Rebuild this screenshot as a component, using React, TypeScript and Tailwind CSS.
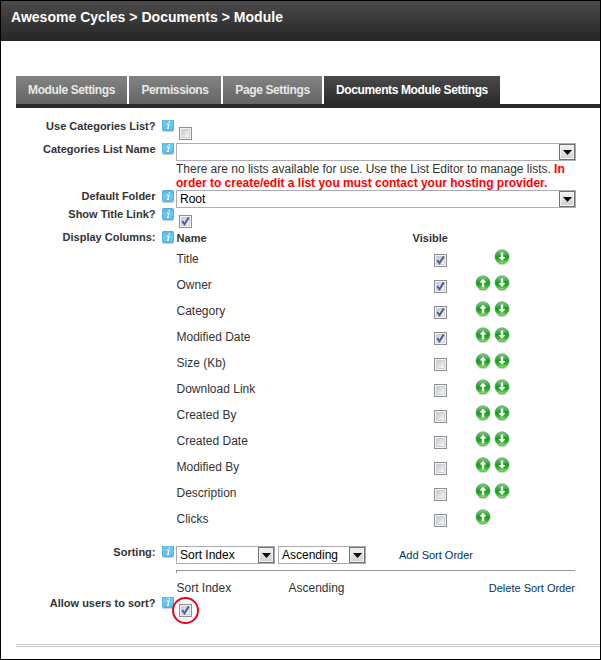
import type { ReactNode } from "react";

function InfoIcon({ cut = false }: { cut?: boolean }) {
  return (
    <svg width="13" height="13" viewBox="0 0 13 13" className="ml-[6px] shrink-0">
      <defs>
        <linearGradient id="info" x1="0" y1="0" x2="0" y2="1">
          <stop offset="0" stopColor="#55b4e4" />
          <stop offset="0.5" stopColor="#6fcbf3" />
          <stop offset="1" stopColor="#55b9ea" />
        </linearGradient>
      </defs>
      <rect x="0.5" y={cut ? -3 : 0.5} width="11" height={cut ? 13.5 : 11} rx="1" fill="url(#info)" stroke="#3f9fd6" strokeOpacity="0.75" />
      <rect x="0.5" y={cut ? 11 : 12} width="11" height="1" fill="#c9d5dc" />
      <g transform={cut ? "translate(0 -1)" : undefined} stroke="#f4fbff" strokeWidth="1.2" fill="none">
        <path d="M6.6 2.6h1.4M5 5.1h1.9L6 9.2M4.8 9.4h2.4" />
      </g>
    </svg>
  );
}

function Check({ on = false }: { on?: boolean }) {
  return (
    <svg width="13" height="13" viewBox="0 0 13 13" className="block shrink-0">
      <defs>
        <linearGradient id="box" x1="0" y1="0" x2="1" y2="1">
          <stop offset="0.1" stopColor="#c6cbd1" />
          <stop offset="0.9" stopColor="#f6f6f6" />
        </linearGradient>
      </defs>
      <rect x="0.5" y="0.5" width="12" height="12" fill="#f4f4f4" stroke="#8e8f8f" />
      <rect x="2.5" y="2.5" width="8" height="8" fill="url(#box)" stroke="#cdd0d4" />
      {on && <path d="M3.2 6.2L5.5 9.3L9.8 2.4" fill="none" stroke="#4a5f9f" strokeWidth="2" />}
    </svg>
  );
}

function Arrow({ up = false }: { up?: boolean }) {
  return (
    <svg width="16" height="16" viewBox="0 0 16 16" className="block shrink-0">
      <defs>
        <linearGradient id="green" x1="0" y1="0" x2="0" y2="1">
          <stop offset="0" stopColor="#8ccb8c" />
          <stop offset="0.35" stopColor="#3fa843" />
          <stop offset="0.5" stopColor="#169a1c" />
          <stop offset="0.75" stopColor="#35b52f" />
          <stop offset="1" stopColor="#9bea7a" />
        </linearGradient>
      </defs>
      <ellipse cx="8" cy="14.8" rx="5" ry="1.1" fill="#d8d8d8" />
      <circle cx="8" cy="7.8" r="7" fill="url(#green)" stroke="#3a9a42" strokeOpacity="0.8" strokeWidth="0.8" />
      <path
        d="M6.8 3.4h2.4v4.6h2.3L8 11.9L4.5 8h2.3z"
        fill="#fff"
        transform={up ? "rotate(180 8 7.8)" : undefined}
      />
    </svg>
  );
}

function Select({ text = "", className }: { text?: string; className: string }) {
  return (
    <div className={`flex h-[18px] shrink-0 justify-between border border-[#abadb3] bg-white ${className}`}>
      <span className="pl-[3px] text-[12px] leading-[16px] whitespace-nowrap text-black">{text}</span>
      <span className="flex h-4 w-4 shrink-0 items-center justify-center border border-[#707070] bg-gradient-to-b from-[#f2f2f2] to-[#cfcfcf] shadow-[inset_0_0_0_1px_#f3f3f3]">
        <svg width="9" height="5" viewBox="0 0 9 5"><path d="M0 0h9L4.5 5z" /></svg>
      </span>
    </div>
  );
}

function Row({ label, cut, className, children }: { label: string; cut?: boolean; className: string; children: ReactNode }) {
  return (
    <div className={`flex items-start ${className}`}>
      <div className="w-[140px] shrink-0 pr-[0.5px] text-right text-[11px] leading-3 font-bold whitespace-nowrap text-[#333]">{label}</div>
      <InfoIcon cut={cut} />
      <div className="ml-px w-[400px] shrink-0">{children}</div>
    </div>
  );
}

const columns: [string, boolean][] = [
  ["Title", true],
  ["Owner", true],
  ["Category", true],
  ["Modified Date", true],
  ["Size (Kb)", false],
  ["Download Link", false],
  ["Created By", false],
  ["Created Date", false],
  ["Modified By", false],
  ["Description", false],
  ["Clicks", false],
];

const tabs = [
  { name: "Module Settings", size: "w-[111px]" },
  { name: "Permissions", size: "w-[92px]" },
  { name: "Page Settings", size: "w-[99px]" },
];

export default function App() {
  return (
    <div className="h-[660px] w-[601px] overflow-hidden border border-black bg-white font-['Liberation_Sans',Arial,sans-serif] text-[12px] text-[#333]">
      <header className="h-10 bg-gradient-to-b from-[#4b4b4b] to-[#262626] pt-[7px] pl-[10px] text-[14px] leading-[18px] font-bold tracking-[0.02px] whitespace-nowrap text-white">
        Awesome Cycles &gt; Documents &gt; Module
      </header>

      <nav className="mt-[35px] ml-[15px] flex h-8 gap-0.5 border-b-4 border-[#2a2a2a] text-center leading-7 font-bold tracking-[-0.38px] whitespace-nowrap">
        {tabs.map((tab) => (
          <div key={tab.name} className={`${tab.size} bg-gradient-to-b from-[#838383] to-[#656565] text-[#e8e8e8]`}>
            {tab.name}
          </div>
        ))}
        <div className="w-[176px] bg-gradient-to-b from-[#4b4b4b] to-[#2a2a2a] text-white">Documents Module Settings</div>
      </nav>

      <main className="ml-[15px] pt-3">
        <Row label="Use Categories List?" cut className="h-[23px]">
          <div className="pt-[7px] pl-[3px]"><Check /></div>
        </Row>
        <Row label="Categories List Name" cut className="h-[47px]">
          <Select className="w-[400px]" />
          <p className="pt-px leading-[14px] tracking-[-0.01px] whitespace-nowrap">
            There are no lists available for use. Use the List Editor to manage lists. <b className="text-[#f00]">In<br />order to create/edit a list you must contact your hosting provider.</b>
          </p>
        </Row>
        <Row label="Default Folder" className="h-[18px]">
          <Select text="Root" className="w-[400px]" />
        </Row>
        <Row label="Show Title Link?" className="h-[23px]">
          <div className="pt-[7px] pl-[3px]"><Check on /></div>
        </Row>
        <Row label="Display Columns:" className="h-[315px]">
          <div className="flex h-[15px] pl-[0.6px] text-[11px] leading-[15px] font-bold">
            <span className="w-[236px]">Name</span>
            <span>Visible</span>
          </div>
          {columns.map(([name, visible], i) => (
            <div key={name} className="flex h-[26px] items-start">
              <span className="w-[258px] pl-[0.5px] leading-[26px]">{name}</span>
              <span className="pt-2"><Check on={visible} /></span>
              <span className="ml-7 w-[19px] pt-[3px]">{i > 0 && <Arrow up />}</span>
              <span className="pt-[3px]">{i < columns.length - 1 && <Arrow />}</span>
            </div>
          ))}
        </Row>
        <Row label="Sorting:" cut className="h-[51px]">
          <div className="flex">
            <Select text="Sort Index" className="w-[99px]" />
            <Select text="Ascending" className="ml-[3px] w-[88px]" />
            <a className="ml-[33px] text-[11px] leading-[18px] text-[#003366]">Add Sort Order</a>
          </div>
          <div className="mt-[6px] mr-px h-[3px] border-t border-l border-[#999]" />
          <div className="flex pt-[7px] pr-px leading-4">
            <span className="w-28 pl-[0.5px]">Sort Index</span>
            <span className="pl-[0.5px]">Ascending</span>
            <a className="ml-auto text-[11px] text-[#003366]">Delete Sort Order</a>
          </div>
        </Row>
        <Row label="Allow users to sort?" cut className="h-[47px]">
          <div className="mt-0 -ml-[4px] flex h-[27px] w-[27px] items-center justify-center rounded-full border-2 border-[#f00012]">
            <Check on />
          </div>
        </Row>
        <div className="h-[3px] border-y border-[#c4c4c4]" />
      </main>
    </div>
  );
}
